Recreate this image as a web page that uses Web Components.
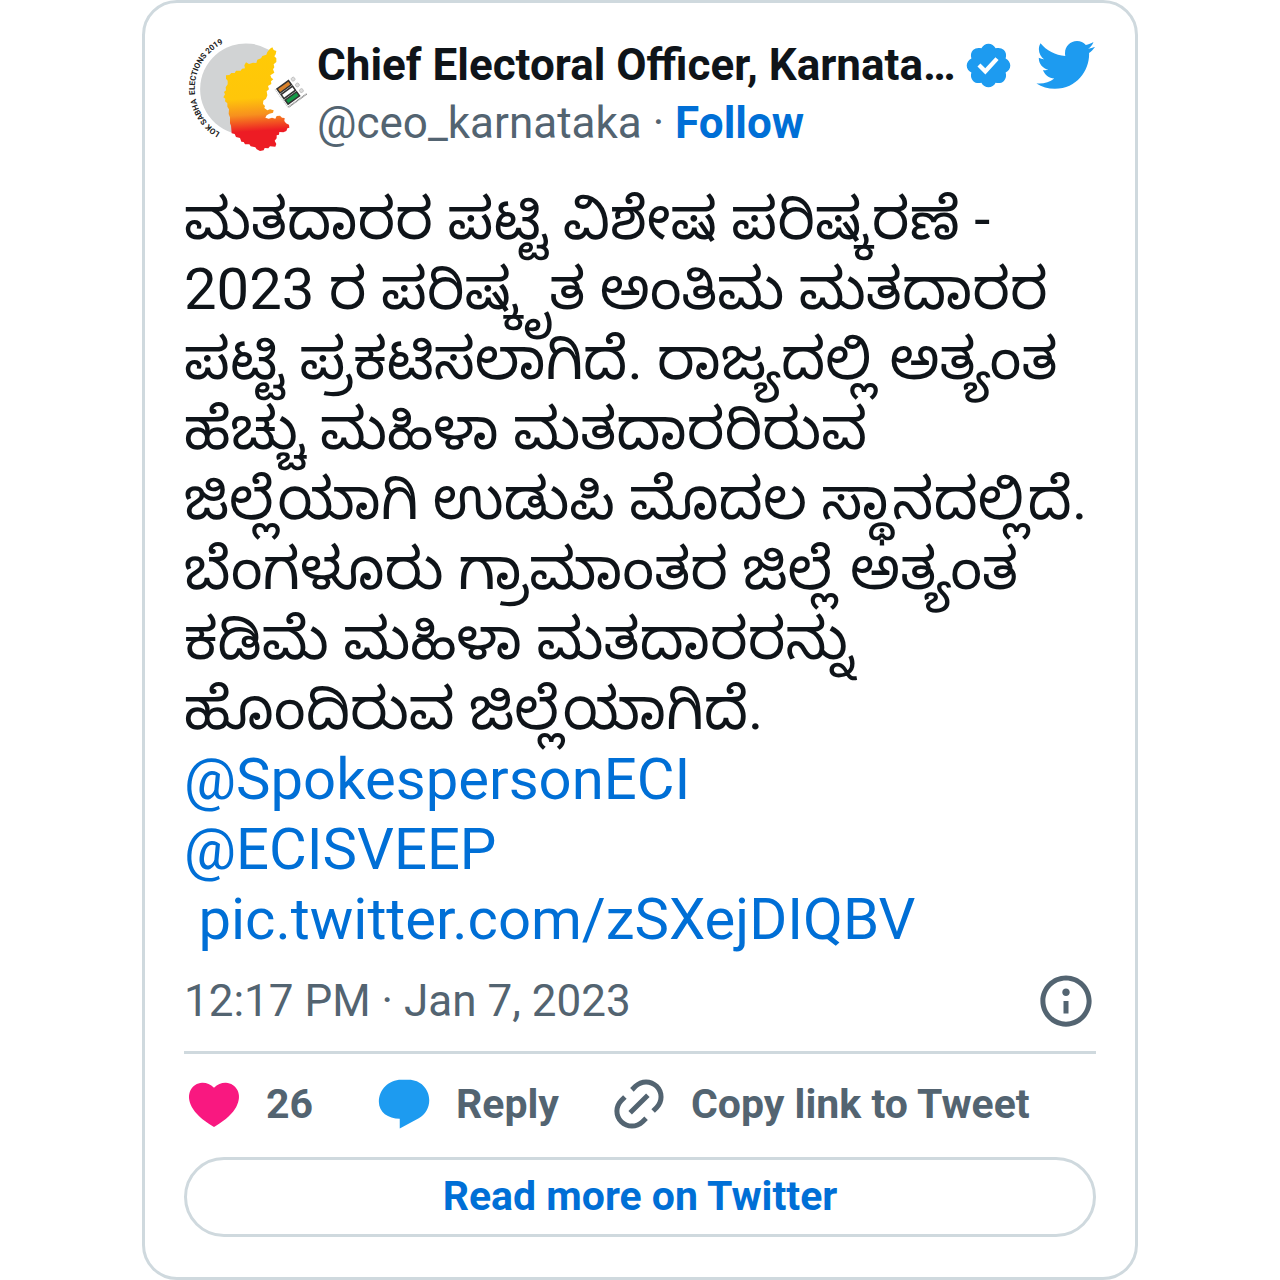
<!DOCTYPE html>
<html lang="kn">
<head>
<meta charset="utf-8">
<meta name="viewport" content="width=device-width, initial-scale=1">
<title>Chief Electoral Officer, Karnataka</title>
<style>
  body {
    margin: 0;
    background: #fff;
    color: #0f1419;
    font-family: Roboto, "Noto Sans Kannada", "Noto Sans", sans-serif;
    --muted: #536471;
    --link: #006fd6;
    --brand: #1d9bf0;
    --line: #cfd9de;
  }
</style>
</head>
<body>
<tweet-card>
  <tweet-header slot="header" name="Chief Electoral Officer, Karnata…" handle="@ceo_karnataka"></tweet-header>
  <tweet-text>
    <span>ಮತದಾರರ ಪಟ್ಟಿ ವಿಶೇಷ ಪರಿಷ್ಕರಣೆ -<br>2023 ರ ಪರಿಷ್ಕೃತ ಅಂತಿಮ ಮತದಾರರ<br>ಪಟ್ಟಿ ಪ್ರಕಟಿಸಲಾಗಿದೆ. ರಾಜ್ಯದಲ್ಲಿ ಅತ್ಯಂತ<br>ಹೆಚ್ಚು ಮಹಿಳಾ ಮತದಾರರಿರುವ<br>ಜಿಲ್ಲೆಯಾಗಿ ಉಡುಪಿ ಮೊದಲ ಸ್ಥಾನದಲ್ಲಿದೆ.<br>ಬೆಂಗಳೂರು ಗ್ರಾಮಾಂತರ ಜಿಲ್ಲೆ ಅತ್ಯಂತ<br>ಕಡಿಮೆ ಮಹಿಳಾ ಮತದಾರರನ್ನು<br>ಹೊಂದಿರುವ ಜಿಲ್ಲೆಯಾಗಿದೆ.</span><br>
    <a href="#spokesperson">@SpokespersonECI</a><br>
    <a href="#sveep">@ECISVEEP</a><br>&nbsp;<a href="#photo">pic.twitter.com/zSXejDIQBV</a>
  </tweet-text>
  <tweet-meta slot="footer">12:17 PM · Jan 7, 2023</tweet-meta>
  <tweet-actions slot="footer" likes="26"></tweet-actions>
  <read-more slot="footer">Read more on Twitter</read-more>
</tweet-card>

<script>
const ICONS = {
  bird: '<path d="M23.643 4.937c-.835.37-1.732.62-2.675.733.962-.576 1.7-1.49 2.048-2.578-.9.534-1.897.922-2.958 1.13-.85-.904-2.06-1.47-3.4-1.47-2.572 0-4.658 2.086-4.658 4.66 0 .364.042.718.12 1.06-3.873-.195-7.304-2.05-9.602-4.868-.4.69-.63 1.49-.63 2.342 0 1.616.823 3.043 2.072 3.878-.764-.025-1.482-.234-2.11-.583v.06c0 2.257 1.605 4.14 3.737 4.568-.392.106-.803.162-1.227.162-.3 0-.593-.028-.877-.082.593 1.85 2.313 3.198 4.352 3.234-1.595 1.25-3.604 1.995-5.786 1.995-.376 0-.747-.022-1.112-.065 2.062 1.323 4.51 2.093 7.14 2.093 8.57 0 13.255-7.098 13.255-13.254 0-.2-.005-.402-.014-.602.91-.658 1.7-1.477 2.323-2.41z"/>',
  verified: '<path d="M22.25 12c0-1.43-.88-2.67-2.19-3.34.46-1.39.2-2.9-.81-3.91s-2.52-1.27-3.91-.81c-.66-1.31-1.91-2.19-3.34-2.19s-2.67.88-3.33 2.19c-1.4-.46-2.91-.2-3.92.81s-1.26 2.52-.8 3.91c-1.31.67-2.2 1.91-2.2 3.34s.89 2.67 2.2 3.34c-.46 1.39-.21 2.9.8 3.91s2.52 1.26 3.91.81c.67 1.31 1.91 2.19 3.34 2.19s2.68-.88 3.34-2.19c1.39.45 2.9.2 3.91-.81s1.27-2.52.81-3.91c1.31-.67 2.19-1.91 2.19-3.34zm-11.71 4.2L6.8 12.46l1.41-1.42 2.26 2.26 4.8-5.23 1.47 1.36-6.2 6.77z"/>',
  info: '<path d="M13.5 8.5c0 .83-.67 1.5-1.5 1.5s-1.5-.67-1.5-1.5S11.17 7 12 7s1.5.67 1.5 1.5zM13 17v-5h-2v5h2zm-1 5.25c5.66 0 10.25-4.59 10.25-10.25S17.66 1.75 12 1.75 1.75 6.34 1.75 12 6.34 22.25 12 22.25zM20.25 12c0 4.56-3.69 8.25-8.25 8.25S3.75 16.56 3.75 12 7.44 3.75 12 3.75s8.25 3.69 8.25 8.25z"/>',
  heart: '<path d="M20.884 13.19c-1.351 2.48-4.001 5.12-8.379 7.67l-.503.3-.504-.3c-4.379-2.55-7.029-5.19-8.382-7.67-1.36-2.5-1.41-4.86-.514-6.67.887-1.79 2.647-2.91 4.601-3.01 1.651-.09 3.368.56 4.798 2.01 1.429-1.45 3.146-2.1 4.796-2.01 1.954.1 3.714 1.22 4.601 3.01.896 1.81.846 4.17-.514 6.67z"/>',
  reply: '<path d="M1.95 11.2C1.95 6.2 5.9 2.3 10.9 2.3h3c4.6 0 8.2 3.6 8.2 8.2 0 3.1-1.6 5.7-4.2 7.2l-7.6 4.1v-3.9C5.6 17.9 1.95 15.2 1.95 11.2z"/>',
  link: '<path d="M18.36 5.64c-1.95-1.96-5.11-1.96-7.07 0L9.88 7.05 8.46 5.64l1.42-1.42c2.73-2.73 7.16-2.73 9.9 0 2.73 2.74 2.73 7.17 0 9.9l-1.42 1.42-1.41-1.42 1.41-1.41c1.96-1.96 1.96-5.12 0-7.07zm-2.12 3.53l-7.07 7.07-1.41-1.41 7.07-7.07 1.41 1.41zm-12.02.71l1.42-1.42 1.41 1.42-1.41 1.41c-1.96 1.96-1.96 5.12 0 7.07 1.95 1.96 5.11 1.96 7.07 0l1.41-1.41 1.42 1.41-1.42 1.42c-2.73 2.73-7.16 2.73-9.9 0-2.73-2.74-2.73-7.17 0-9.9z"/>',
};

class TweetIcon extends HTMLElement {
  constructor() {
    super();
    this.attachShadow({ mode: "open" });
  }

  connectedCallback() {
    this.shadowRoot.innerHTML = `
      <style>
        :host { display: block; flex: none; width: 60px; height: 60px; }
        svg { display: block; width: 100%; height: 100%; fill: currentColor; }
      </style>
      <svg viewBox="0 0 24 24" aria-hidden="true">${ICONS[this.getAttribute("name")] || ""}</svg>
    `;
  }
}

class TweetAvatar extends HTMLElement {
  constructor() {
    super();
    this.attachShadow({ mode: "open" }).innerHTML = `
      <style>
        :host { display: block; flex: none; width: 123px; height: 116px; }
        svg { display: block; width: 100%; height: 100%; overflow: visible; }
        text { font: 700 24px Roboto, sans-serif; fill: #222; }
      </style>
      <svg viewBox="12 18 369 348" role="img" aria-label="Profile picture">
        <defs>
          <linearGradient id="state" gradientUnits="userSpaceOnUse" x1="195" y1="50" x2="215" y2="360">
            <stop offset="0" stop-color="#ffcb05"/>
            <stop offset=".5" stop-color="#ffc60a"/>
            <stop offset=".66" stop-color="#f7901e"/>
            <stop offset=".82" stop-color="#ed1c24"/>
            <stop offset="1" stop-color="#ed1c24"/>
          </linearGradient>
          <path id="ring" d="M133 315A152 152 0 0 1 150 32"/>
        </defs>
        <!-- grey disc, open on the side of the map -->
        <path fill="#d1d3d4" d="M156 308A137 137 0 1 1 268 60L230 180Z"/>
        <!-- state outline -->
        <path fill="url(#state)" d="M262 66L270 56L277 52L281 60L289 63L287 73L283 79L289 85L289 96L281 103L283 112L279 118L283 128L271 136L274 143L280 148L273 154L274 162L264 168L267 178L260 184L262 196L258 206L250 212L249 222L255 228L253 234L262 241L270 238L281 241L279 248L268 251L260 256L256 263L266 266L276 263L286 266L290 258L300 257L306 263L314 264L313 273L318 280L327 284L328 293L322 295L319 303L310 307L298 306L297 314L290 316L290 325L284 332L289 342L286 350L270 349L265 355L254 354L251 361L240 363L230 358L226 352L212 349L208 343L195 343L191 336L184 335L180 324L168 321L164 312L155 310L153 287L150 280L150 262L146 252L147 238L142 230L142 220L135 214L136 206L130 202L135 193L132 186L138 181L137 172L143 163L143 152L138 146L138 136L148 135L154 129L164 129L168 122L182 122L186 116L195 115L193 106L198 97L207 102L219 98L229 99L232 89L243 85L247 78L259 74Z"/>
        <g transform="translate(324 187) rotate(-36) scale(1.15)">
          <path d="M-23-26V31" stroke="#ccc" stroke-width="3" stroke-dasharray="3 2"/>
          <g stroke="#333" stroke-width="4">
            <rect x="-18" y="-24" width="37" height="13" fill="#d9822b"/>
            <rect x="-18" y="-6" width="37" height="13" fill="#fff"/>
            <rect x="-18" y="12" width="37" height="13" fill="#159947"/>
          </g>
          <g fill="#ddd" stroke="#bbb" stroke-width="2">
            <circle cx="31" cy="-20" r="5"/>
            <circle cx="31" cy="-1" r="5"/>
            <circle cx="31" cy="17" r="5"/>
          </g>
          <path d="M-22 32H38" stroke="#888" stroke-width="4" stroke-dasharray="3 1"/>
        </g>
        <text text-anchor="middle"><textPath href="#ring" startOffset="49%">LOK SABHA &#160;ELECTIONS 2019</textPath></text>
      </svg>
    `;
  }
}

class TweetHeader extends HTMLElement {
  constructor() {
    super();
    this.attachShadow({ mode: "open" });
  }

  connectedCallback() {
    this.shadowRoot.innerHTML = `
      <style>
        :host { display: flex; align-items: flex-start; gap: 10px; }
        .author { flex: 1; min-width: 0; font-size: 44px; line-height: 58px; }
        .row { display: flex; align-items: center; justify-content: flex-end; height: 58px; }
        .name { flex: 1; font-weight: 700; white-space: nowrap; }
        .verified { width: 51px; height: 51px; margin-right: 20px; color: var(--brand); }
        .bird { width: 62px; height: 62px; color: var(--brand); }
        .handle { color: var(--muted); }
        a { color: inherit; text-decoration: none; }
        .follow { color: var(--link); font-weight: 700; }
      </style>
      <tweet-avatar></tweet-avatar>
      <div class="author">
        <div class="row">
          <a class="name" href="#profile">${this.getAttribute("name")}</a>
          <tweet-icon class="verified" name="verified"></tweet-icon>
          <tweet-icon class="bird" name="bird"></tweet-icon>
        </div>
        <div class="handle"><a href="#profile">${this.getAttribute("handle")}</a> · <a class="follow" href="#follow">Follow</a></div>
      </div>
    `;
  }
}

class TweetText extends HTMLElement {
  constructor() {
    super();
    this.attachShadow({ mode: "open" }).innerHTML = `
      <style>
        :host { display: block; font-size: 58px; line-height: 70px; }
        ::slotted(a) { color: var(--link); text-decoration: none; }
      </style>
      <slot></slot>
    `;
  }
}

class TweetMeta extends HTMLElement {
  constructor() {
    super();
    this.attachShadow({ mode: "open" }).innerHTML = `
      <style>
        :host {
          display: flex;
          align-items: center;
          justify-content: space-between;
          margin-top: 17px;
          padding-bottom: 20px;
          border-bottom: 3px solid var(--line);
          color: var(--muted);
          font-size: 44px;
        }
        button { padding: 0; border: 0; background: none; color: inherit; cursor: pointer; }
      </style>
      <time datetime="2023-01-07T12:17"><slot></slot></time>
      <button aria-label="Twitter Ads info and privacy"><tweet-icon name="info"></tweet-icon></button>
    `;
  }
}

class TweetActions extends HTMLElement {
  constructor() {
    super();
    this.attachShadow({ mode: "open" });
  }

  connectedCallback() {
    this.shadowRoot.innerHTML = `
      <style>
        :host { display: flex; gap: 50px; padding: 20px 0; }
        button {
          display: flex;
          align-items: center;
          gap: 22px;
          padding: 0;
          border: 0;
          background: none;
          color: var(--muted);
          font: 700 41px Roboto, sans-serif;
          white-space: nowrap;
          cursor: pointer;
        }
        .like span { min-width: 58px; text-align: left; }
        .like tweet-icon { color: #f91880; }
        .reply tweet-icon { color: var(--brand); }
      </style>
      <button class="like"><tweet-icon name="heart"></tweet-icon><span>${this.getAttribute("likes")}</span></button>
      <button class="reply"><tweet-icon name="reply"></tweet-icon><span>Reply</span></button>
      <button class="copy"><tweet-icon name="link"></tweet-icon><span>Copy link to Tweet</span></button>
    `;
  }
}

class ReadMore extends HTMLElement {
  constructor() {
    super();
    this.attachShadow({ mode: "open" }).innerHTML = `
      <style>
        :host { display: block; margin-top: 3px; }
        a {
          display: block;
          padding-bottom: 2px;
          border: 3px solid var(--line);
          border-radius: 40px;
          color: var(--link);
          font-size: 41px;
          font-weight: 700;
          line-height: 72px;
          text-align: center;
          text-decoration: none;
        }
      </style>
      <a href="#more"><slot></slot></a>
    `;
  }
}

class TweetCard extends HTMLElement {
  constructor() {
    super();
    this.attachShadow({ mode: "open" }).innerHTML = `
      <style>
        :host {
          display: block;
          box-sizing: border-box;
          max-width: 996px;
          margin: 0 auto;
          padding: 33px 39px 40px;
          border: 3px solid var(--line);
          border-radius: 35px;
        }
        .body { margin-top: 32px; }
      </style>
      <slot name="header"></slot>
      <div class="body"><slot></slot></div>
      <slot name="footer"></slot>
    `;
  }
}

customElements.define("tweet-icon", TweetIcon);
customElements.define("tweet-avatar", TweetAvatar);
customElements.define("tweet-header", TweetHeader);
customElements.define("tweet-text", TweetText);
customElements.define("tweet-meta", TweetMeta);
customElements.define("tweet-actions", TweetActions);
customElements.define("read-more", ReadMore);
customElements.define("tweet-card", TweetCard);
</script>
</body>
</html>
